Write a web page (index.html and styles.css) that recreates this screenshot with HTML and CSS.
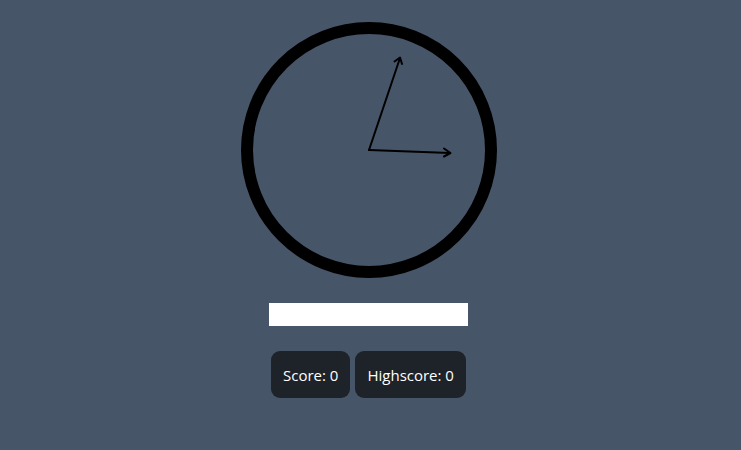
FILE: index.html
```html
<!DOCTYPE html>
<html>
<head>
<meta charset="utf-8">
<link rel="stylesheet" href="styles.css">
</head>
<body>
<main class="app">
  <svg class="clock" width="260" height="260" viewBox="0 0 260 260">
    <circle cx="130" cy="130" r="122" fill="none" stroke="#000" stroke-width="12"/>
    <g fill="none" stroke="#000" stroke-width="2" stroke-linecap="round" stroke-linejoin="round">
      <line x1="130" y1="130" x2="161" y2="38"/>
      <polyline points="155.5,41.5 161,37.5 163,44"/>
      <line x1="130" y1="130" x2="211" y2="133"/>
      <polyline points="205,128.5 211.5,133 205,136.5"/>
    </g>
  </svg>
  <input class="answer" type="text">
  <div class="scores">
    <div class="score">Score: 0</div>
    <div class="score">Highscore: 0</div>
  </div>
</main>
</body>
</html>
```
FILE: styles.css
```css
html, body {
  margin: 0;
  padding: 0;
  height: 100%;
}
body {
  background: #475569;
  font-family: "Open Sans", "Noto Sans", sans-serif;
}
.app {
  display: flex;
  flex-direction: column;
  align-items: center;
  padding-top: 20px;
  padding-right: 4px;
}
.clock {
  display: block;
}
.answer {
  box-sizing: border-box;
  width: 199px;
  height: 23px;
  margin-top: 23px;
  border: none;
  background: #fff;
  padding: 0 4px;
  outline: none;
}
.scores {
  display: flex;
  gap: 5px;
  margin-top: 25px;
}
.score {
  height: 47px;
  box-sizing: border-box;
  padding: 0 12px;
  display: flex;
  align-items: center;
  background: #1e2229;
  color: #fff;
  border-radius: 9px;
  font-size: 15px;
}
```
